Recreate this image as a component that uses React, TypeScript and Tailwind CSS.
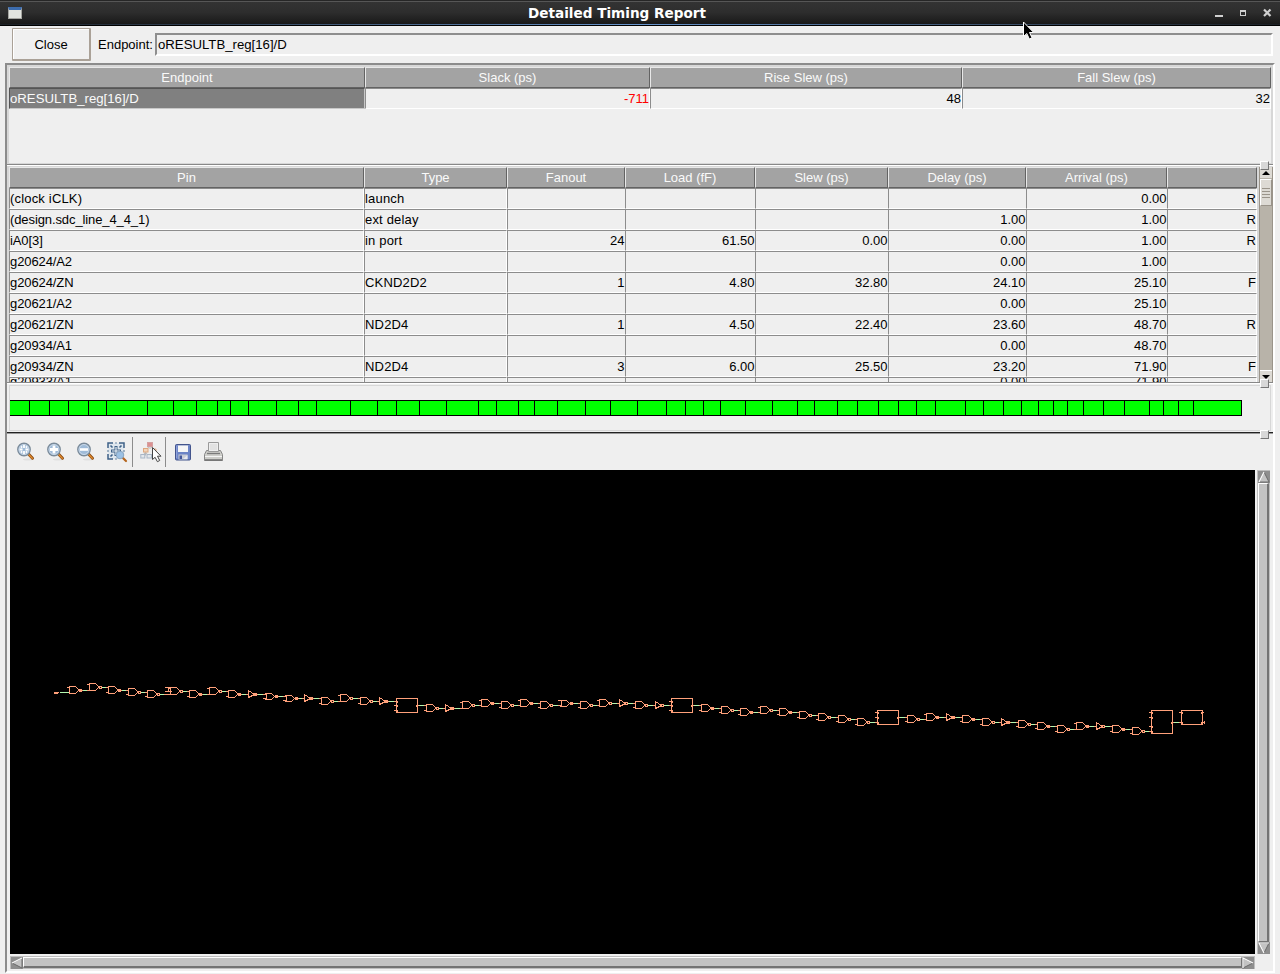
import React from "react";

type Kind = "D" | "T" | "O" | "B";
type Node = { k: Kind; x: number; y: number; f?: boolean; h?: number; top?: number; pins?: number[]; rpins?: number[] };

const d = (x: number, y: number, f = 0): Node => ({ k: "D", x, y, f: !!f });
const t = (x: number, y: number, f = 0): Node => ({ k: "T", x, y, f: !!f });
const o = (x: number, y: number, f = 0): Node => ({ k: "O", x, y, f: !!f });
const box = (x: number, top: number, h: number, y: number, pins: number[], rpins: number[]): Node => ({ k: "B", x, top, h, y, pins, rpins });

const NODES: Node[] = [
  d(69, 690, 1), d(89, 687), d(108, 690, 1), d(128, 692), d(147, 694), d(170, 691), d(189, 694, 1), d(209, 691),
  d(228, 694, 1), t(248, 694, 1), o(265, 696, 1), o(285, 698, 1), t(304, 698, 1), d(321, 701), d(340, 698), d(360, 701),
  t(379, 701, 1), box(396, 698, 14, 705, [701, 705, 710], [705]),
  d(426, 708), t(445, 708, 1), d(462, 705), d(481, 703, 1), d(501, 705), d(520, 703, 1), d(540, 705), o(560, 703, 1),
  d(580, 705), d(599, 703), t(619, 703), d(635, 705), t(655, 705), box(671, 698, 14, 705, [701, 705, 710], [705]),
  d(701, 708, 1), d(721, 710), d(740, 712, 1), d(760, 710), d(779, 712, 1), d(799, 715), d(818, 717), d(838, 719),
  d(857, 722), box(877, 710, 14, 717, [712, 717, 722], [717]), d(907, 719), d(926, 717, 1), t(946, 717, 1),
  d(962, 719, 1), d(982, 722), t(1001, 722, 1), d(1018, 724), d(1037, 726, 1), d(1057, 729), d(1076, 726, 1),
  t(1096, 726), d(1112, 729, 1), d(1132, 731), box(1151, 710, 23, 722, [712, 717, 726, 731], [722]),
  box(1181, 710, 14, 722, [712, 722], [712, 722]),
];

const outX = (n: Node) => n.x + (n.k === "B" ? 22 : n.k === "T" ? (n.f ? 10 : 9) : n.f ? 14 : 13);

function Gate({ n, prevY }: { n: Node; prevY: number }) {
  const { x, y } = n;
  if (n.k === "B") {
    return (
      <g>
        <rect x={x} y={n.top} width={21} height={n.h} fill="none" />
        {n.pins!.map((p) => <path key={p} d={`M${x - 2} ${p}h3M${x + 1} ${p}v1`} />)}
        {n.rpins!.map((p) => <path key={p} d={`M${x + 20} ${p}v1M${x + 20} ${p}h2`} />)}
      </g>
    );
  }
  const bx = n.k === "T" ? x + 6 : x + 10;
  const body =
    n.k === "T" ? `M${x} ${y - 4}V${y + 3}L${x + 6} ${y}Z`
    : n.k === "O" ? `M${x} ${y - 3}H${x + 6}L${x + 9} ${y}L${x + 6} ${y + 3}H${x}M${x + 1} ${y - 2}V${y + 2}`
    : `M${x} ${y - 4}H${x + 6}L${x + 9} ${y - 1}V${y}L${x + 6} ${y + 3}H${x}Z`;
  const stub = prevY > y ? y - 3 : y + 2;
  return (
    <g>
      <path d={body} fill="none" />
      {n.k !== "T" && <path d={`M${x - 2} ${stub}h2`} />}
      <rect x={bx} y={y - 1} width={2} height={2} fill={n.f ? "#ffa07a" : "#000"} />
      {n.f && <path d={`M${bx + 2} ${y}h1`} />}
    </g>
  );
}

function Schematic() {
  return (
    <svg className="block h-[484px] w-[1245px] bg-black" viewBox="10 470 1245 484" shapeRendering="crispEdges">
      <g transform="translate(.5 .5)" stroke="#ffa07a" strokeWidth="1" strokeLinecap="square">
        <path d="M54 692h4M54 693h3" />
        <path d="M60 692H68" stroke="#b4f8b0" />
        {NODES.slice(1).map((n, i) => {
          const p = NODES[i];
          return (
            <g key={i}>
              <path d={`M${outX(p)} ${p.y}H${n.x - 2}`} stroke="#b4f8b0" />
              <path d={`M${n.x - 2} ${p.y}h2`} />
            </g>
          );
        })}
        <path d="M165 687h8M168 687v4h3M165 691h3M164 694h10" fill="none" />
        {NODES.map((n, i) => <Gate key={i} n={n} prevY={i ? NODES[i - 1].y : 692} />)}
        <path d="M1202 722v1M1204 721v2" />
      </g>
    </svg>
  );
}

const ROWS: string[][] = [
  ["(clock iCLK)", "launch", "", "", "", "", "0.00", "R"],
  ["(design.sdc_line_4_4_1)", "ext delay", "", "", "", "1.00", "1.00", "R"],
  ["iA0[3]", "in port", "24", "61.50", "0.00", "0.00", "1.00", "R"],
  ["g20624/A2", "", "", "", "", "0.00", "1.00", ""],
  ["g20624/ZN", "CKND2D2", "1", "4.80", "32.80", "24.10", "25.10", "F"],
  ["g20621/A2", "", "", "", "", "0.00", "25.10", ""],
  ["g20621/ZN", "ND2D4", "1", "4.50", "22.40", "23.60", "48.70", "R"],
  ["g20934/A1", "", "", "", "", "0.00", "48.70", ""],
  ["g20934/ZN", "ND2D4", "3", "6.00", "25.50", "23.20", "71.90", "F"],
  ["g20933/A1", "", "", "", "", "0.00", "71.90", ""],
];

const TICKS = [
  29, 49, 68, 88, 106, 147, 173, 196, 217, 230, 248, 276, 298, 316, 350, 377, 396, 419, 446, 478, 496, 518, 534, 557,
  585, 610, 637, 666, 685, 703, 720, 745, 772, 797, 814, 837, 857, 878, 898, 916, 935, 965, 983, 1003, 1021, 1038,
  1053, 1067, 1083, 1103, 1124, 1149, 1163, 1178, 1193, 1241,
];

function Head({ children }: { children?: React.ReactNode }) {
  return (
    <div className="h-[21px] border border-t-[#e8e8e8] border-l-[#e8e8e8] border-r-[#636363] border-b-[#636363] bg-[#a3a3a3] text-center leading-[19px] text-[#fafafa]">
      {children}
    </div>
  );
}

function Cell({ children, right, clipped, className = "" }: { children?: React.ReactNode; right?: boolean; clipped?: boolean; className?: string }) {
  return (
    <div className={`whitespace-nowrap border border-t-[#8c8c8c] border-l-[#8c8c8c] border-r-white ${clipped ? "h-[5px] overflow-hidden border-b-0 leading-[8px]" : "h-[21px] border-b-white leading-[19px]"} ${right ? "text-right" : "text-left"} ${className}`}>
      {children}
    </div>
  );
}

const cellTracking = (c: string, j: number) =>
  j === 0 ? (c.startsWith("(clock") ? "tracking-[0.18px]" : "tracking-[-0.1px]") : j === 1 ? "tracking-[0.18px]" : j === 7 ? "" : "-mr-[0.5px] pl-px";

function Handle({ className }: { className: string }) {
  return <div className={`absolute left-[1253px] z-10 size-[9px] border border-t-white border-l-white border-r-[#777] border-b-[#777] bg-[#d8d8d8] ${className}`} />;
}

function Magnifier({ mode }: { mode: "fit" | "in" | "out" }) {
  return (
    <svg className="size-5" viewBox="0 0 20 20">
      <ellipse cx="12" cy="17.6" rx="5" ry="1" fill="#000" opacity=".06" />
      <path d="M12 11.500l4.500 4.700" stroke="#8a4a10" strokeWidth="3" strokeLinecap="round" />
      <path d="M12.500 12.300l3.800 4" stroke="#e08a2c" strokeWidth="1.400" strokeLinecap="round" />
      <circle cx="8" cy="7.500" r="6.200" fill="#9fbbd8" stroke="#7a8a99" strokeWidth="1.400" />
      <circle cx="8" cy="7.500" r="5" fill="none" stroke="#d4e0ec" strokeWidth=".8" />
      {mode === "out" && <path d="M4 7.500h8" stroke="#fff" strokeWidth="2.600" />}
      {mode === "in" && <path d="M4 7.500h8M8 3.500v8" stroke="#fff" strokeWidth="2.800" />}
      {mode === "fit" && <path d="M3.600 7.500h3M9.400 7.500h3M8 3.100v3M8 8.900v3M5 4.500l1.200 1.200M11 4.500l-1.200 1.200M5 10.500l1.200-1.200M11 10.500l-1.200-1.200" stroke="#fff" strokeWidth="1.800" />}
    </svg>
  );
}

function ZoomBox() {
  return (
    <svg className="size-[22px]" viewBox="0 0 22 22">
      <rect x="2" y="2" width="16" height="16" fill="#dfe7ee" />
      <path d="M2 7V2h5M13 2h5v5M2 13v5h5" fill="none" stroke="#3f6288" strokeWidth="1.500" />
      <path d="M9 2h2M2 9v2M18 9v2M9 18h2" stroke="#6e8aa6" strokeWidth="1.200" />
      <path d="M4.500 4.500l2 2M15.500 4.500l-2 2M4.500 15.500l2-2" stroke="#3f6288" strokeWidth="1.600" />
      <path d="M10 5v10M5 10h10" stroke="#3f6288" strokeWidth="3" />
      <path d="M10 6v8M6 10h8" stroke="#e9f0f6" strokeWidth="1.200" />
      <path d="M17 17l3 3" stroke="#b5651d" strokeWidth="2.200" strokeLinecap="round" />
      <circle cx="14" cy="14" r="3.800" fill="#9cc1e4" stroke="#8aa6c0" />
    </svg>
  );
}

function Hierarchy() {
  return (
    <svg className="h-[24px] w-[22px]" viewBox="0 0 22 24">
      <path d="M10 6v3M5.500 13v2.500M10 6L5.500 10M10 6l5 4.500M5.500 12l-3 4M5.500 12l3 4" stroke="#b8b8b8" fill="none" />
      <rect x="7.500" y="2.500" width="5" height="4" fill="#dc9090" stroke="#d4a0a0" />
      <rect x="3.500" y="8.500" width="4.500" height="3.500" fill="#f1d5bb" stroke="#dda77f" />
      <path d="M13 9h3v4" stroke="#dda77f" fill="none" />
      <rect x=".800" y="14.500" width="4" height="3.500" fill="#e3e7eb" stroke="#a9b6c5" />
      <rect x="7" y="14.500" width="4.500" height="3.500" fill="#e3e7eb" stroke="#a9b6c5" />
      <path d="M12.500 7.500v12l2.600-2.200 2.300 4.400 2.300-1.200-2.200-4.300h3.500z" fill="#fff" stroke="#444" strokeWidth="1" />
    </svg>
  );
}

function Floppy() {
  return (
    <svg className="h-[20px] w-[18px]" viewBox="0 0 18 20">
      <rect x="1.500" y="2.500" width="15" height="15.500" rx="1" fill="#6c84c6" stroke="#43548c" />
      <rect x="4" y="3" width="10" height="7" fill="#f6f6f6" />
      <path d="M3.800 3.500h10.400" stroke="#b7c0d8" />
      <path d="M2.600 4v12" stroke="#91a4dc" />
      <rect x="4.500" y="12.500" width="9" height="5" fill="#c8ccd6" />
      <rect x="5.500" y="13.500" width="2.500" height="3.500" fill="#43569a" />
      <path d="M9 17l4.500-4v4z" fill="#e9e9ef" />
    </svg>
  );
}

function Printer() {
  return (
    <svg className="h-[22px] w-[21px]" viewBox="0 0 21 22">
      <rect x="1" y="17.500" width="19" height="2.500" rx="1" fill="#777" />
      <path d="M3.500 9.500h14l2 4v5h-18v-5z" fill="#cdcdc9" stroke="#868686" />
      <path d="M5.500 1.500h10v9h-10z" fill="#eee" stroke="#9a9a9a" />
      <path d="M7 4h7M7 6h7M7 8h7" stroke="#d6d6d6" />
      <path d="M4 12.500h13" stroke="#7a7a7a" strokeWidth="1.300" />
      <path d="M2 15.500h17" stroke="#f4f4f4" />
    </svg>
  );
}

function Arrow({ dir }: { dir: "up" | "down" | "left" | "right" }) {
  const pts = { up: "M6 1L11 11H1z", down: "M1 1h10L6 11z", left: "M1 6L11 1v10z", right: "M1 1v10L11 6z" }[dir];
  const lit = { up: "M6 1L1 11", down: "M11 1H1L6 11", left: "M1 6L11 1", right: "M1 11V1L11 6" }[dir];
  return (
    <svg className="size-3 shrink-0 bg-[#8e8e8e]" viewBox="0 0 12 12">
      <path d={pts} fill="#c3c3c3" stroke="#6b6b6b" />
      <path d={lit} fill="none" stroke="#fff" strokeWidth="1.200" />
    </svg>
  );
}

export default function App() {
  return (
    <div className="relative flex h-[974px] w-[1280px] flex-col overflow-hidden bg-[#efefef] font-['Liberation_Sans',Arial,sans-serif] text-[13px] text-black">
      <header className="relative flex h-[26px] shrink-0 items-center border-b border-black bg-linear-to-b from-[#343434] via-[#2d2d2d] to-[#171717] pt-px pr-[8px] pl-[8px]">
        <div className="absolute inset-x-0 top-0 h-px bg-[#262626]" />
        <div className="absolute inset-x-0 top-px h-px bg-[#565656]" />
        <div className="absolute inset-x-0 bottom-0 h-px bg-linear-to-r from-[#1b2026] via-[#6795ce] to-[#1b2026]" />
        <div className="h-3 w-[14px] border border-t-[3px] border-[#a5a5a0] border-t-[#3c6cae] bg-[#e2e4df]" />
        <div className="w-[1190px] text-center font-['DejaVu_Sans',sans-serif] text-[13.6px] leading-5 font-bold text-white">Detailed Timing Report</div>
        <svg className="ml-auto h-3 w-[58px] shrink-0" viewBox="0 0 58 12" fill="none" stroke="#d0d0d0">
          <path d="M1 9h8" strokeWidth="2" />
          <rect x="26.500" y="3.500" width="5" height="5" strokeWidth="1" />
          <path d="M26 4h6" strokeWidth="2" />
          <path d="M50 2.500l6.500 6.500M56.500 2.500l-6.500 6.500" strokeWidth="2.200" />
        </svg>
      </header>

      <div className="flex h-[37px] shrink-0 pt-[2px] pl-3">
        <button className="h-[33px] w-[79px] rounded-[1px] border border-r-2 border-b-2 border-[#aaa197] bg-[#f0f0f0] pt-px shadow-[inset_1px_1px_0_#fff]">Close</button>
        <label className="w-[64px] pl-[7px] leading-[34px]">Endpoint:</label>
        <div className="mt-[5px] h-[23px] w-[1118px] border-2 border-t-[#8e8e8e] border-l-[#8e8e8e] border-r-white border-b-white pl-px text-[13.2px] leading-[19px]">oRESULTB_reg[16]/D</div>
      </div>

      <main className="relative ml-[5px] flex h-[910px] w-[1270px] shrink-0 flex-col border-2 border-t-[#8c8c8c] border-l-[#8c8c8c] border-r-white border-b-white">
        <section className="h-[99px] shrink-0 border-2 border-b-[1px] border-[#d7d7d7]">
          <div className="grid grid-cols-[356px_285px_312px_309px]">
            <Head>Endpoint</Head><Head>Slack (ps)</Head><Head>Rise Slew (ps)</Head><Head>Fall Slew (ps)</Head>
            <div className="h-[21px] border border-t-[#555] border-l-[#555] border-r-[#c8c8c8] border-b-[#c8c8c8] bg-[#808080] text-[13.2px] leading-[19px] text-[#fafafa]">oRESULTB_reg[16]/D</div>
            <Cell right className="text-[#ff0000]">-711</Cell><Cell right>48</Cell><Cell right>32</Cell>
          </div>
        </section>
        <div className="h-[2px] shrink-0 border-t border-[#888] bg-white" />

        <section className="flex h-[216px] shrink-0 overflow-hidden border-t border-l-2 border-[#d7d7d7]">
          <div className="grid h-[215px] grid-cols-[355px_143px_118px_130px_133px_138px_141px_90px] content-start">
            {["Pin", "Type", "Fanout", "Load (fF)", "Slew (ps)", "Delay (ps)", "Arrival (ps)", ""].map((h, i) => <Head key={i}>{h}</Head>)}
            {ROWS.map((r, i) => r.map((c, j) => (
              <Cell key={`${i}-${j}`} right={j > 1} clipped={i === 9} className={cellTracking(c, j)}>{c}</Cell>
            )))}
          </div>
          <div className="w-[2px] bg-[#d7d7d7]" />
          <div className="flex w-[14px] flex-col border-x border-[#9a948a] bg-[#b8b3a9]">
            <div className="flex h-[11px] items-center justify-center bg-[#dddad4]"><svg className="h-1 w-2" viewBox="0 0 8 4"><path d="M4 0l4 4H0z" /></svg></div>
            <div className="mt-px flex h-[27px] flex-col justify-center gap-[2px] border border-t-white border-l-white border-r-[#9a948a] border-b-[#9a948a] bg-[#dddad4] px-px">
              {[0, 1, 2, 3].map((i) => <div key={i} className="h-px bg-[#9a948a]" />)}
            </div>
            <div className="mt-auto flex h-[12px] items-center justify-center border-t border-white bg-[#dddad4]"><svg className="h-1 w-2" viewBox="0 0 8 4"><path d="M0 0h8L4 4z" /></svg></div>
          </div>
        </section>
        <div className="h-[3px] shrink-0 border-t border-b border-t-[#888] border-b-[#efefef] bg-white" />

        <section className="ml-[2px] h-[46px] w-[1262px] shrink-0 border border-[#d7d7d7] pt-[14px]">
          <div className="flex h-4 w-[1232px] border-y border-black bg-[#00ff00]">
            {TICKS.map((x, i) => <div key={x} className="shrink-0 border-r border-black" style={{ width: x - (i ? TICKS[i - 1] : 9) }} />)}
          </div>
        </section>
        <div className="mt-px h-[2px] shrink-0 border-t border-[#222] bg-[#999]" />

        <div className="flex h-[36px] shrink-0 items-center pl-[9px]">
          <div className="flex items-center gap-[10px]"><Magnifier mode="fit" /><Magnifier mode="in" /><Magnifier mode="out" /><ZoomBox /></div>
          <div className="ml-[4px] h-[30px] w-px bg-[#8c8c8c]" />
          <div className="ml-[7px]"><Hierarchy /></div>
          <div className="ml-[3px] h-[30px] w-px bg-[#8c8c8c]" />
          <div className="ml-[8px]"><Floppy /></div>
          <div className="ml-[11px]"><Printer /></div>
        </div>

        <div className="flex h-[484px] shrink-0 pl-[3px]">
          <Schematic />
          <div className="ml-[2px] flex w-[13px] flex-col items-center border-x border-t border-[#bebebe] bg-[#aaa]">
            <Arrow dir="up" />
            <div className="w-[11px] grow border border-r-2 border-t-white border-l-white border-r-[#747474] border-b-[#747474] bg-[#c3c3c3]" />
            <Arrow dir="down" />
          </div>
        </div>
        <div className="mt-[2px] ml-[3px] flex h-[13px] w-[1245px] shrink-0 items-center border border-[#bebebe] bg-[#aaa]">
          <Arrow dir="left" />
          <div className="h-[11px] grow border border-b-2 border-t-white border-l-white border-r-[#747474] border-b-[#747474] bg-[#c3c3c3]" />
          <Arrow dir="right" />
        </div>
        <Handle className="top-[96px]" /><Handle className="top-[314px]" /><Handle className="top-[365px]" />
      </main>

      <svg className="absolute top-[21px] left-[1022px] h-5 w-[14px]" viewBox="0 0 14 20">
        <path d="M1.500 1v14.500l3.300-3 2.500 5.500 2.700-1.200-2.500-5.300h4.200z" fill="#000" stroke="#fff" strokeWidth="1" />
      </svg>
    </div>
  );
}
